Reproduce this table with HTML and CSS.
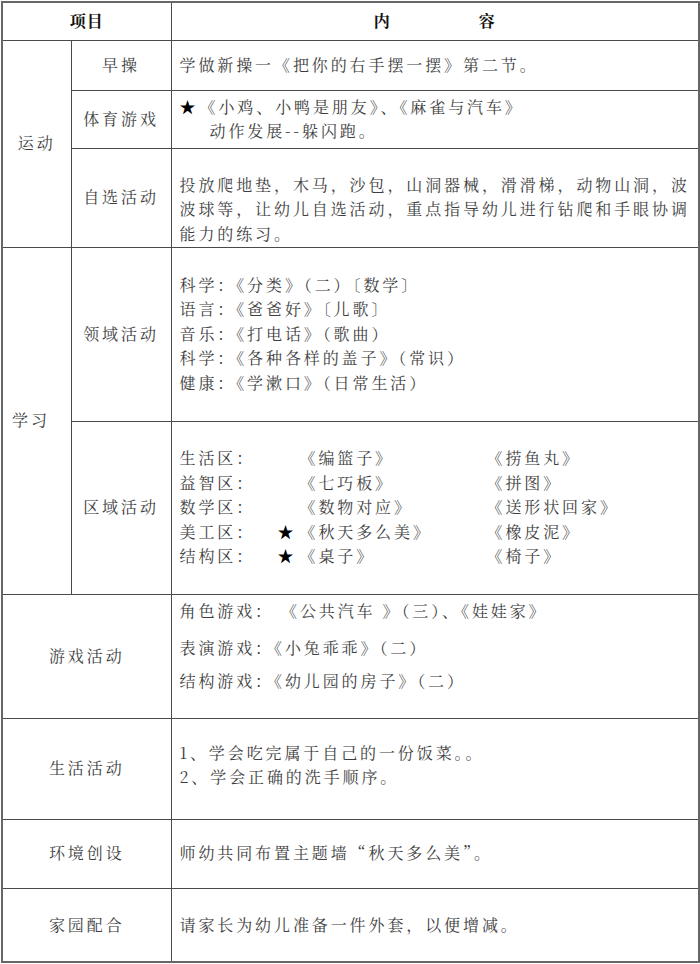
FILE: index.html
```html
<!DOCTYPE html>
<html lang="zh-CN">
<head>
<meta charset="utf-8">
<title>活动安排</title>
<link rel="stylesheet" href="styles.css">
</head>
<body>
<table class="plan">
  <colgroup>
    <col class="c1">
    <col class="c2">
    <col class="c3">
  </colgroup>
  <tr class="r-head">
    <th colspan="2" class="head">项目</th>
    <th class="head"><span class="nei">内</span>容</th>
  </tr>
  <tr class="r-zc">
    <td rowspan="3" class="group">运动</td>
    <td class="label">早操</td>
    <td class="content">学做新操一《把你的右手摆一摆》第二节。</td>
  </tr>
  <tr class="r-ty">
    <td class="label">体育游戏</td>
    <td class="content">
      <div><span class="star">★</span>《小鸡、小鸭是朋友》、《麻雀与汽车》</div>
      <div class="indent">动作发展--躲闪跑。</div>
    </td>
  </tr>
  <tr class="r-zx">
    <td class="label">自选活动</td>
    <td class="content pad-zx">投放爬地垫，木马，沙包，山洞器械，滑滑梯，动物山洞，波波球等，让幼儿自选活动，重点指导幼儿进行钻爬和手眼协调能力的练习。</td>
  </tr>
  <tr class="r-ly">
    <td rowspan="2" class="group left">学习</td>
    <td class="label">领域活动</td>
    <td class="content">
      <div>科学：《分类》（二）〔数学〕</div>
      <div>语言：《爸爸好》〔儿歌〕</div>
      <div>音乐：《打电话》（歌曲）</div>
      <div>科学：《各种各样的盖子》（常识）</div>
      <div>健康：《学漱口》（日常生活）</div>
    </td>
  </tr>
  <tr class="r-qy">
    <td class="label">区域活动</td>
    <td class="content">
      <div class="zone"><span class="z1">生活区：</span><span class="z2">《编篮子》</span><span>《捞鱼丸》</span></div>
      <div class="zone"><span class="z1">益智区：</span><span class="z2">《七巧板》</span><span>《拼图》</span></div>
      <div class="zone"><span class="z1">数学区：</span><span class="z2">《数物对应》</span><span>《送形状回家》</span></div>
      <div class="zone"><span class="z1">美工区：</span><span class="z2"><span class="star zs">★</span>《秋天多么美》</span><span>《橡皮泥》</span></div>
      <div class="zone"><span class="z1">结构区：</span><span class="z2"><span class="star zs">★</span>《桌子》</span><span>《椅子》</span></div>
    </td>
  </tr>
  <tr class="r-yx">
    <td colspan="2" class="label">游戏活动</td>
    <td class="content top">
      <div class="g1">角色游戏： 《公共汽车 》（三）、《娃娃家》</div>
      <div class="g2">表演游戏：《小兔乖乖》（二）</div>
      <div class="g3">结构游戏：《幼儿园的房子》（二）</div>
    </td>
  </tr>
  <tr class="r-sh">
    <td colspan="2" class="label">生活活动</td>
    <td class="content pad-sh">
      <div>1、学会吃完属于自己的一份饭菜。。</div>
      <div>2、学会正确的洗手顺序。</div>
    </td>
  </tr>
  <tr class="r-hj">
    <td colspan="2" class="label">环境创设</td>
    <td class="content">师幼共同布置主题墙“秋天多么美”。</td>
  </tr>
  <tr class="r-jy">
    <td colspan="2" class="label">家园配合</td>
    <td class="content">请家长为幼儿准备一件外套，以便增减。</td>
  </tr>
</table>
</body>
</html>
```
FILE: styles.css
```css
html, body {
  margin: 0;
  padding: 0;
  background: #ffffff;
}

body {
  font-family: "Noto Serif CJK SC", "Noto Sans CJK SC", serif;
  font-size: 16px;
  color: #3e3e3e;
}

.plan {
  border-collapse: collapse;
  table-layout: fixed;
  width: 697px;
  margin: 1px 0 0 1px;
  border: 2px solid #666;
}

.c1 { width: 69px; }
.c2 { width: 100px; }
.c3 { width: 528px; }

.plan th,
.plan td {
  border: 1px solid #4a4a4a;
  padding: 0;
  vertical-align: middle;
  letter-spacing: 2.9px;
  line-height: 24.5px;
  font-weight: normal;
}

.head {
  font-weight: bold !important;
  color: #111;
  text-align: center;
  letter-spacing: 1px !important;
}

.nei {
  margin-right: 88px;
}

.group {
  text-align: center;
}

.group.left {
  text-align: left;
  padding-left: 9px !important;
}

.label {
  text-align: center;
}

.content {
  text-align: left;
  padding: 0 4px 0 8px !important;
}

.star {
  color: #000;
  letter-spacing: 0;
  margin-right: 4px;
}

.indent {
  padding-left: 30px;
}

.pad-zx {
  padding-top: 24px !important;
}

.zone {
  display: flex;
}

.z1 {
  width: 98px;
  flex: none;
}

.z2 {
  width: 209px;
  flex: none;
  padding-left: 22px;
  box-sizing: border-box;
}

.z2 .zs {
  margin-left: -22px;
  display: inline-block;
  width: 18px;
  margin-right: 4px;
}

.top {
  vertical-align: top !important;
  padding-top: 4px !important;
}

.g2 { margin-top: 13px; }
.g3 { margin-top: 8px; }

.pad-sh {
  padding-bottom: 7px !important;
}

.r-head { height: 38px; }
.r-zc { height: 50px; }
.r-ty { height: 58px; }
.r-zx { height: 99px; }
.r-ly { height: 174px; }
.r-qy { height: 173px; }
.r-yx { height: 124px; }
.r-sh { height: 101px; }
.r-hj { height: 69px; }
.r-jy { height: 74px; }
```
